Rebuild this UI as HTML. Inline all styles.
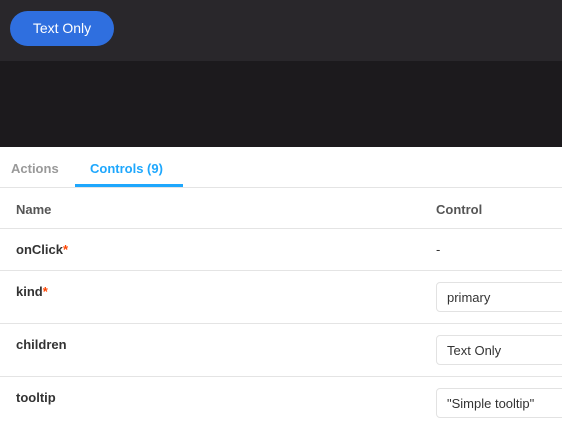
<!DOCTYPE html>
<html><head><style>
body{margin:0;width:562px;height:426px;overflow:hidden;background:#fff;font-family:"Liberation Sans",sans-serif;position:relative}
.top{position:absolute;left:0;top:0;width:562px;height:61px;background:#29272b}
.mid{position:absolute;left:0;top:61px;width:562px;height:86px;background:#1c1a1d}
.btn{position:absolute;left:10px;top:11px;width:104px;height:35px;border-radius:18px;background:#2f6fdf;color:#fff;font-size:14px;line-height:35px;text-align:center}
.tabs{position:absolute;left:0;top:147px;width:562px;height:40px;border-bottom:1px solid #e4e4e4}
.tab{position:absolute;top:14px;font-size:13px;font-weight:bold}
.ul{position:absolute;left:75px;top:37px;width:108px;height:3px;background:#1ea7fd}
.line{position:absolute;left:0;width:562px;height:1px;background:#e4e4e4}
.t{position:absolute;font-size:13px;font-weight:bold;color:#333}
.req{color:#ff4400}
.in{position:absolute;left:436px;width:140px;height:30px;border:1px solid #e2e2e2;border-radius:4px;box-sizing:border-box;font-size:13px;color:#333;padding-left:10px;line-height:29px}
</style></head><body>
<div class="top"><div class="btn">Text Only</div></div>
<div class="mid"></div>
<div class="tabs">
<div class="tab" style="left:11px;color:#999">Actions</div>
<div class="tab" style="left:90px;color:#1ea7fd">Controls (9)</div>
<div class="ul"></div>
</div>
<div class="t" style="left:16px;top:202px;color:#555">Name</div>
<div class="t" style="left:436px;top:202px;color:#555">Control</div>
<div class="line" style="top:228px"></div>
<div class="t" style="left:16px;top:242px">onClick<span class="req">*</span></div>
<div class="t" style="left:436px;top:242px;font-weight:normal">-</div>
<div class="line" style="top:270px"></div>
<div class="t" style="left:16px;top:284px">kind<span class="req">*</span></div>
<div class="in" style="top:282px">primary</div>
<div class="line" style="top:323px"></div>
<div class="t" style="left:16px;top:337px">children</div>
<div class="in" style="top:335px">Text Only</div>
<div class="line" style="top:376px"></div>
<div class="t" style="left:16px;top:390px">tooltip</div>
<div class="in" style="top:388px">"Simple tooltip"</div>
</body></html>
